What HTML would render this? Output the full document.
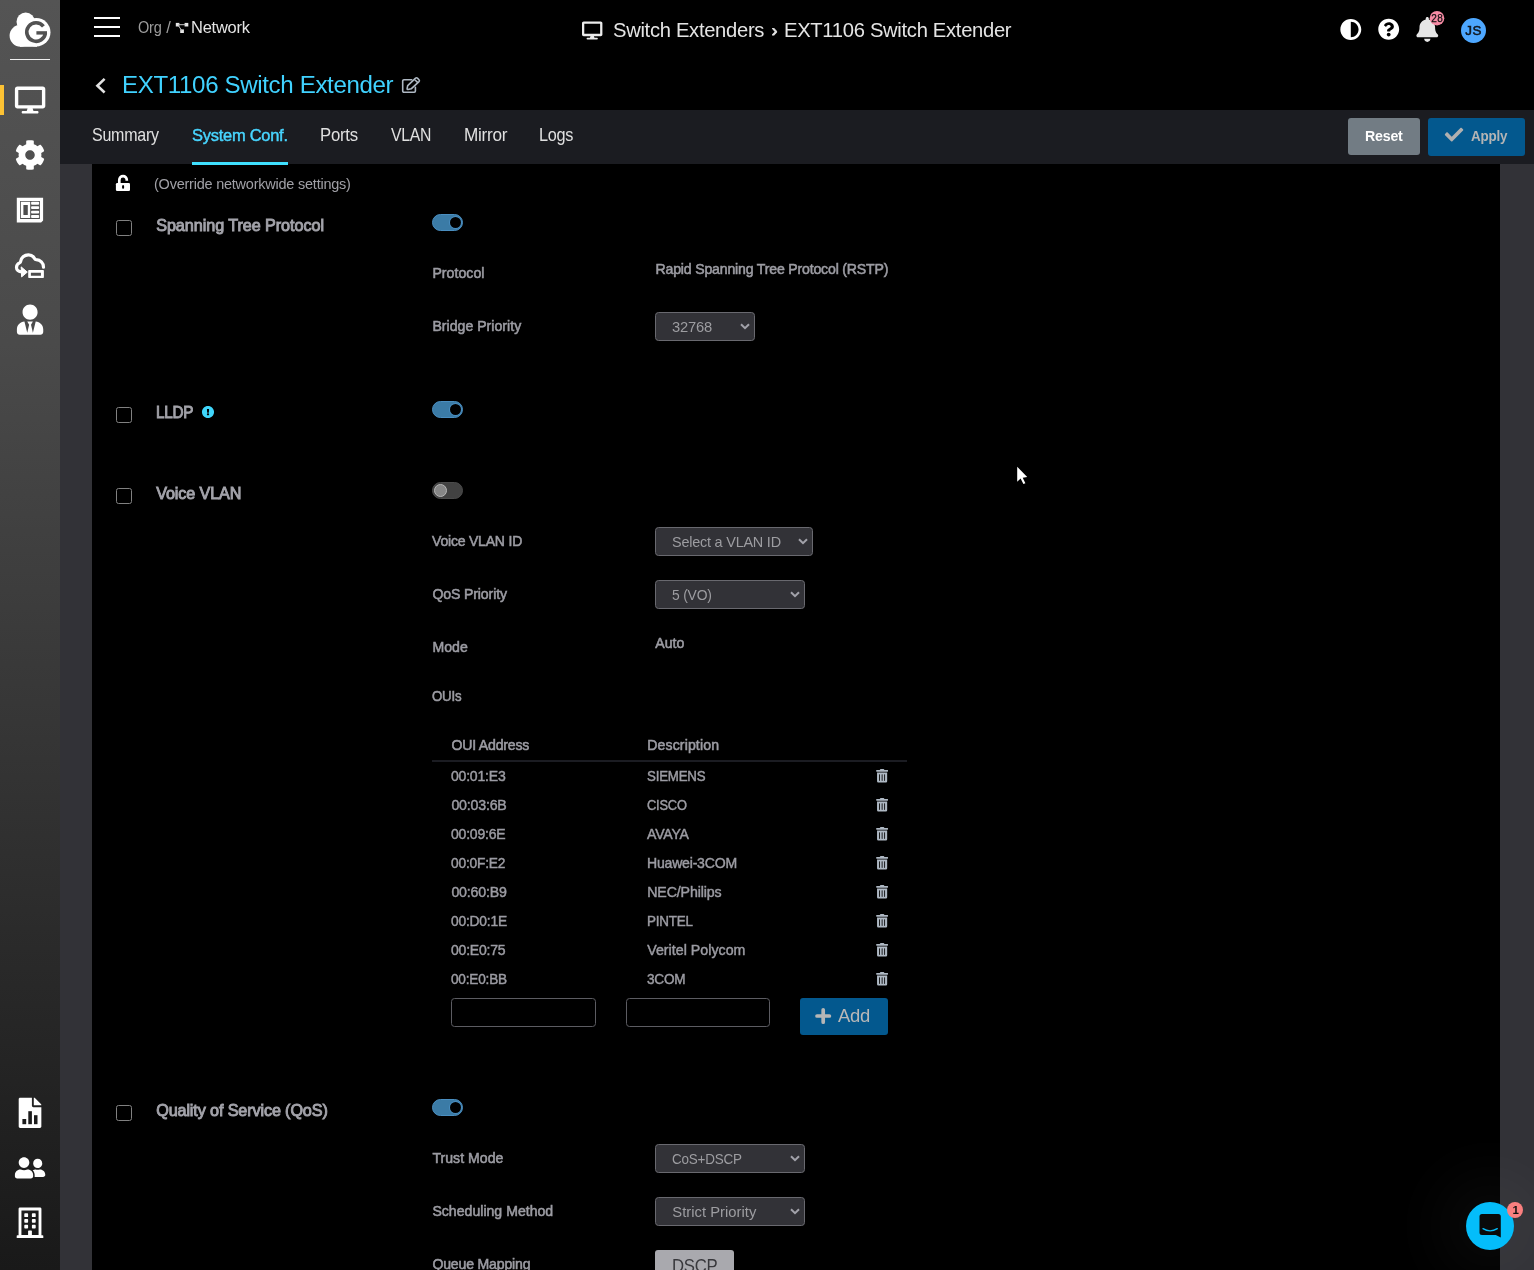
<!DOCTYPE html>
<html lang="en"><head><meta charset="utf-8"><title>EXT1106 Switch Extender</title>
<style>
html,body{margin:0;padding:0;background:#000;}
body{width:1534px;height:1270px;position:relative;overflow:hidden;font-family:"Liberation Sans",sans-serif;}
.b{position:absolute;display:block;}
.t{position:absolute;white-space:nowrap;line-height:20px;transform-origin:0 50%;}
#tx{position:absolute;left:0;top:0;width:1534px;height:1270px;z-index:5;will-change:transform;}
svg.i{position:absolute;left:0;top:0;z-index:4;}
</style></head><body>
<div class="b" style="left:0px;top:0px;width:60px;height:1270px;background:linear-gradient(180deg,#545454 0%,#4a4a4a 27%,#191919 100%);"></div>
<div class="b" style="left:60px;top:110px;width:1474px;height:54px;background:#1b1c21;"></div>
<div class="b" style="left:60px;top:164px;width:32px;height:1106px;background:#323237;"></div>
<div class="b" style="left:1500px;top:164px;width:34px;height:1106px;background:#323237;"></div>
<div class="b" style="left:192px;top:162px;width:96px;height:3px;background:#3fe0ff;"></div>
<div class="b" style="left:94px;top:17px;width:26px;height:2px;background:#fdfdfd;"></div>
<div class="b" style="left:94px;top:26px;width:26px;height:2px;background:#fdfdfd;"></div>
<div class="b" style="left:94px;top:35px;width:26px;height:2px;background:#fdfdfd;"></div>
<div class="b" style="left:0px;top:85px;width:4px;height:30px;background:#fcc234;"></div>
<div class="b" style="left:10px;top:59px;width:40px;height:1px;background:#f0f0f0;"></div>
<div class="b" style="left:1348px;top:118px;width:72px;height:37px;background:#727c84;border-radius:3px;"></div>
<div class="b" style="left:1428px;top:118px;width:97px;height:38px;background:#03588e;border-radius:3px;"></div>
<div class="b" style="left:800px;top:998px;width:88px;height:37px;background:#03588e;border-radius:3px;"></div>
<div class="b" style="left:655px;top:1250px;width:79px;height:40px;background:#a9a9ae;border-radius:3px;"></div>
<div class="b" style="left:116px;top:220px;width:16px;height:16px;box-sizing:border-box;border:1px solid #818181;border-radius:2.5px;"></div>
<div class="b" style="left:116px;top:407px;width:16px;height:16px;box-sizing:border-box;border:1px solid #818181;border-radius:2.5px;"></div>
<div class="b" style="left:116px;top:488px;width:16px;height:16px;box-sizing:border-box;border:1px solid #818181;border-radius:2.5px;"></div>
<div class="b" style="left:116px;top:1105px;width:16px;height:16px;box-sizing:border-box;border:1px solid #818181;border-radius:2.5px;"></div>
<div class="b" style="left:432px;top:214px;width:31px;height:17px;box-sizing:border-box;background:#3b7ba6;border:1px solid #4a8ec0;border-radius:9px;"></div><div class="b" style="left:450px;top:217px;width:11px;height:11px;background:#000;border-radius:50%;box-shadow:0 0 0 1px #4a8ec0;"></div>
<div class="b" style="left:432px;top:401px;width:31px;height:17px;box-sizing:border-box;background:#3b7ba6;border:1px solid #4a8ec0;border-radius:9px;"></div><div class="b" style="left:450px;top:404px;width:11px;height:11px;background:#000;border-radius:50%;box-shadow:0 0 0 1px #4a8ec0;"></div>
<div class="b" style="left:432px;top:482px;width:31px;height:17px;box-sizing:border-box;background:#424242;border:1px solid #4b4b4b;border-radius:9px;"></div><div class="b" style="left:434px;top:484px;width:13px;height:13px;background:#878787;border-radius:50%;box-sizing:border-box;border:1px solid #b8b8b8;"></div>
<div class="b" style="left:432px;top:1099px;width:31px;height:17px;box-sizing:border-box;background:#3b7ba6;border:1px solid #4a8ec0;border-radius:9px;"></div><div class="b" style="left:450px;top:1102px;width:11px;height:11px;background:#000;border-radius:50%;box-shadow:0 0 0 1px #4a8ec0;"></div>
<div class="b" style="left:655px;top:312px;width:100px;height:29px;box-sizing:border-box;background:#323237;border:1px solid #69696f;border-radius:3.5px;"></div><svg class="b" style="left:740px;top:323px" width="10" height="7" viewBox="0 0 10 7"><path d="M1 1.2 L5 5.2 L9 1.2" fill="none" stroke="#a2a2aa" stroke-width="2"/></svg>
<div class="b" style="left:655px;top:527px;width:158px;height:29px;box-sizing:border-box;background:#323237;border:1px solid #69696f;border-radius:3.5px;"></div><svg class="b" style="left:798px;top:538px" width="10" height="7" viewBox="0 0 10 7"><path d="M1 1.2 L5 5.2 L9 1.2" fill="none" stroke="#a2a2aa" stroke-width="2"/></svg>
<div class="b" style="left:655px;top:580px;width:150px;height:29px;box-sizing:border-box;background:#323237;border:1px solid #69696f;border-radius:3.5px;"></div><svg class="b" style="left:790px;top:591px" width="10" height="7" viewBox="0 0 10 7"><path d="M1 1.2 L5 5.2 L9 1.2" fill="none" stroke="#a2a2aa" stroke-width="2"/></svg>
<div class="b" style="left:655px;top:1144px;width:150px;height:29px;box-sizing:border-box;background:#323237;border:1px solid #69696f;border-radius:3.5px;"></div><svg class="b" style="left:790px;top:1155px" width="10" height="7" viewBox="0 0 10 7"><path d="M1 1.2 L5 5.2 L9 1.2" fill="none" stroke="#a2a2aa" stroke-width="2"/></svg>
<div class="b" style="left:655px;top:1197px;width:150px;height:29px;box-sizing:border-box;background:#323237;border:1px solid #69696f;border-radius:3.5px;"></div><svg class="b" style="left:790px;top:1208px" width="10" height="7" viewBox="0 0 10 7"><path d="M1 1.2 L5 5.2 L9 1.2" fill="none" stroke="#a2a2aa" stroke-width="2"/></svg>
<div class="b" style="left:451px;top:998px;width:145px;height:29px;box-sizing:border-box;border:1px solid #5c5c62;border-radius:3.5px;"></div>
<div class="b" style="left:626px;top:998px;width:144px;height:29px;box-sizing:border-box;border:1px solid #5c5c62;border-radius:3.5px;"></div>
<div class="b" style="left:432px;top:760px;width:475px;height:2px;background:#1b1c22;"></div>
<div class="b" style="left:1461px;top:18px;width:24.8px;height:24.8px;background:#4da7ff;border-radius:50%;"></div>
<div class="b" style="left:1466px;top:1202px;width:48px;height:48px;background:#04bdfa;border-radius:50%;box-shadow:0 0 60px 30px rgba(255,255,255,0.035);"></div>
<div class="b" style="left:1507px;top:1201.7px;width:16.2px;height:16.2px;background:#fa7f7f;border-radius:50%;"></div>
<svg class="i" width="1534" height="1270" viewBox="0 0 1534 1270">
<g fill="#fff"><circle cx="25.7" cy="21.8" r="9.2"/><circle cx="20.6" cy="35.8" r="11"/><circle cx="36.3" cy="32.3" r="14.2"/><rect x="20" y="36" width="17" height="10.8"/><rect x="18" y="20" width="14" height="16"/></g>
<path d="M43.43 26.27 A9.3 9.3 0 1 0 45.36 32.8" fill="none" stroke="#525252" stroke-width="3.6"/><rect x="36.4" y="31.2" width="10.6" height="3.4" fill="#525252"/>
<path transform="translate(14.9 86.6) scale(0.05277777777777778)" fill="#fff" d="M528 0H48C21.5 0 0 21.5 0 48v320c0 26.5 21.5 48 48 48h192l-16 48h-72c-13.3 0-24 10.7-24 24s10.7 24 24 24h272c13.3 0 24-10.7 24-24s-10.7-24-24-24h-72l-16-48h192c26.5 0 48-21.5 48-48V48c0-26.5-21.5-48-48-48zm-16 352H64V64h448v288z"/>
<path transform="translate(14.783935742971886 139.7839357429719) scale(0.05943775100401607)" fill="#fff" d="M487.4 315.7l-42.6-24.6c4.3-23.2 4.3-47 0-70.2l42.6-24.6c4.9-2.8 7.1-8.6 5.5-14-11.1-35.6-30-67.8-54.7-94.6-3.8-4.1-10-5.1-14.8-2.3L380.8 110c-17.9-15.4-38.5-27.3-60.8-35.1V25.8c0-5.6-3.9-10.5-9.4-11.7-36.7-8.2-74.3-7.8-109.2 0-5.5 1.2-9.4 6.1-9.4 11.7V75c-22.2 7.9-42.8 19.8-60.8 35.1L88.7 85.5c-4.9-2.8-11-1.900-14.8 2.300-24.700 26.700-43.600 58.900-54.700 94.600-1.700 5.400.600 11.200 5.500 14L67.300 221c-4.300 23.200-4.300 47 0 70.200l-42.600 24.600c-4.900 2.800-7.100 8.600-5.500 14 11.100 35.600 30 67.800 54.700 94.600 3.800 4.100 10 5.100 14.800 2.300l42.600-24.600c17.900 15.400 38.500 27.300 60.800 35.100v49.200c0 5.600 3.900 10.500 9.400 11.700 36.700 8.200 74.300 7.800 109.200 0 5.500-1.200 9.400-6.100 9.400-11.700v-49.200c22.200-7.900 42.800-19.800 60.800-35.100l42.600 24.600c4.900 2.800 11 1.900 14.800-2.300 24.700-26.700 43.600-58.900 54.700-94.600 1.500-5.500-.7-11.300-5.600-14.100zM256 336c-44.100 0-80-35.900-80-80s35.900-80 80-80 80 35.900 80 80-35.900 80-80 80z"/>
<path fill="#fff" fill-rule="evenodd" d="M16.8 197.7 H43.1 V220.4 L41.1 222.4 H16.8 Z M20.1 201 V219 H39.9 V201 Z"/>
<path fill="#fff" fill-rule="evenodd" d="M20.9 201.8 H30.2 V218 H20.9 Z M23.4 205.1 V214.9 H27.8 V205.1 Z"/>
<rect x="31.1" y="201.8" width="8" height="3.0" rx="0.8" fill="#fff"/>
<rect x="31.1" y="206.2" width="8" height="2.9" rx="0.8" fill="#fff"/>
<rect x="31.1" y="210.8" width="8" height="2.8" rx="0.8" fill="#fff"/>
<rect x="31.1" y="215" width="8" height="3.0" rx="0.8" fill="#fff"/>
<path fill="none" stroke="#fff" stroke-width="3.2" stroke-linecap="round" stroke-linejoin="round" d="M43.5 267.2 C43.5 263 40.3 259.9 36.2 259.7 C35.2 259.6 34.9 259.1 34.6 258.6 C33.4 256.3 31.200 254.800 28.500 254.800 C24.300 254.800 21 257.800 20.600 261.500 C20.500 262.300 20.100 262.600 19.500 262.900 C17.700 263.700 16.500 265.400 16.500 267.500 C16.500 270 18.500 271.900 21.800 271.900"/>
<path fill="#fff" d="M21.2 266.9 L27.3 272.1 L21.6 276.9 Z" stroke="#fff" stroke-width="1" stroke-linejoin="round"/>
<path fill="#fff" fill-rule="evenodd" d="M29 269.900 H43.100 A0.800 0.800 0 0 1 43.900 270.700 V277.200 A0.800 0.800 0 0 1 43.100 278 H29 A0.800 0.800 0 0 1 28.200 277.200 V270.700 A0.800 0.800 0 0 1 29 269.900 Z M30.900 272.700 V275.700 H40.900 V272.700 Z"/>
<path transform="translate(16.9 304.6) scale(0.0587890625)" fill="#fff" d="M224 256c70.7 0 128-57.300 128-128S294.700 0 224 0 96 57.300 96 128s57.300 128 128 128zm95.800 32.600L272 480l-32-136 32-56h-96l32 56-32 136-47.800-191.400C56.900 292 0 350.300 0 422.400V464c0 26.500 21.500 48 48 48h352c26.500 0 48-21.500 48-48v-41.600c0-72.100-56.900-130.400-128.200-133.800z"/>
<path transform="translate(18.7 1097.8) scale(0.058984375)" fill="#fff" d="M224 136V0H24C10.7 0 0 10.7 0 24v464c0 13.3 10.7 24 24 24h336c13.300 0 24-10.700 24-24V160H248c-13.200 0-24-10.800-24-24zm160-14.100v6.100H256V0h6.100c6.400 0 12.500 2.500 17 7l97.900 98c4.500 4.500 7 10.600 7 16.900z"/>
<rect x="22.4" y="1119" width="3.8" height="5.2" fill="#1c1c1c"/>
<rect x="28.3" y="1111.2" width="3.6" height="13.0" fill="#1c1c1c"/>
<rect x="34" y="1115.2" width="3.5" height="9.0" fill="#1c1c1c"/>
<path transform="translate(14.9 1155.78) scale(0.0475)" fill="#fff" d="M192 256c61.900 0 112-50.100 112-112S253.900 32 192 32 80 82.100 80 144s50.100 112 112 112zm76.800 32h-8.300c-20.800 10-43.900 16-68.500 16s-47.600-6-68.500-16h-8.300C51.600 288 0 339.600 0 403.200V432c0 26.500 21.500 48 48 48h288c26.500 0 48-21.500 48-48v-28.800c0-63.600-51.600-115.200-115.200-115.200zM480 256c53 0 96-43 96-96s-43-96-96-96-96 43-96 96 43 96 96 96zm48 32h-3.800c-13.900 4.800-28.600 8-44.200 8s-30.300-3.200-44.200-8H432c-20.400 0-39.200 5.900-55.700 15.400 24.400 26.300 39.700 61.200 39.700 99.800v38.400c0 2.200-.5 4.300-.6 6.400H592c26.500 0 48-21.500 48-48 0-61.900-50.100-112-112-112z"/>
<path transform="translate(16.7 1207.6) scale(0.059375)" fill="#fff" d="M128 148v-40c0-6.600 5.400-12 12-12h40c6.600 0 12 5.400 12 12v40c0 6.600-5.400 12-12 12h-40c-6.600 0-12-5.400-12-12zm140 12h40c6.600 0 12-5.400 12-12v-40c0-6.600-5.400-12-12-12h-40c-6.600 0-12 5.400-12 12v40c0 6.600 5.400 12 12 12zm-128 96h40c6.600 0 12-5.400 12-12v-40c0-6.600-5.400-12-12-12h-40c-6.600 0-12 5.400-12 12v40c0 6.600 5.400 12 12 12zm128 0h40c6.600 0 12-5.400 12-12v-40c0-6.600-5.400-12-12-12h-40c-6.600 0-12 5.400-12 12v40c0 6.600 5.400 12 12 12zm-76 84v-40c0-6.600-5.400-12-12-12h-40c-6.600 0-12 5.400-12 12v40c0 6.600 5.400 12 12 12h40c6.600 0 12-5.400 12-12zm76 12h40c6.600 0 12-5.400 12-12v-40c0-6.600-5.400-12-12-12h-40c-6.600 0-12 5.400-12 12v40c0 6.600 5.400 12 12 12zm180 124v36H0v-36c0-6.600 5.400-12 12-12h19.500V24c0-13.300 10.700-24 24-24h337c13.300 0 24 10.700 24 24v440H436c6.600 0 12 5.400 12 12zM79.500 463H192v-67c0-6.600 5.400-12 12-12h40c6.600 0 12 5.400 12 12v67h112.500V49L80 48l-.5 415z"/>
<g fill="#e6e6e6"><rect x="175.8" y="22.9" width="3.6" height="3.6"/><rect x="184.6" y="22.9" width="3.700" height="3.600"/><rect x="180.200" y="29.400" width="3.700" height="3.600"/></g><path d="M178 24.700 H186 M178 25 L182 31" stroke="#c8c8c8" stroke-width="1" fill="none"/>
<path transform="translate(582 21.4) scale(0.035416666666666666)" fill="#ececec" d="M528 0H48C21.5 0 0 21.5 0 48v320c0 26.5 21.5 48 48 48h192l-16 48h-72c-13.3 0-24 10.7-24 24s10.7 24 24 24h272c13.3 0 24-10.7 24-24s-10.7-24-24-24h-72l-16-48h192c26.5 0 48-21.5 48-48V48c0-26.5-21.5-48-48-48zm-16 352H64V64h448v288z"/>
<path transform="translate(1340.0129032258064 18.71290322580645) scale(0.04213709677419355)" fill="#fff" d="M8 256c0 136.966 111.033 248 248 248s248-111.034 248-248S392.966 8 256 8 8 119.033 8 256zm248 184V72c101.705 0 184 82.311 184 184 0 101.705-82.311 184-184 184z"/>
<path transform="translate(1377.9129032258065 18.412903225806453) scale(0.04213709677419355)" fill="#fff" d="M504 256c0 136.997-111.043 248-248 248S8 392.997 8 256C8 119.083 119.043 8 256 8s248 111.083 248 248zM262.655 90c-54.497 0-89.255 22.957-116.549 63.758-3.536 5.286-2.353 12.415 2.715 16.258l34.699 26.310c5.205 3.947 12.621 3.008 16.665-2.122 17.864-22.658 30.113-35.797 57.303-35.797 20.429 0 45.698 13.148 45.698 32.958 0 14.976-12.363 22.667-32.534 33.976C247.128 238.528 216 254.941 216 296v4c0 6.627 5.373 12 12 12h56c6.627 0 12-5.373 12-12v-1.333c0-28.462 83.186-29.647 83.186-106.667 0-58.002-60.165-102-116.531-102zM256 338c-25.365 0-46 20.635-46 46 0 25.364 20.635 46 46 46s46-20.636 46-46c0-25.365-20.635-46-46-46z"/>
<path transform="translate(1416.4 17) scale(0.0486328125)" fill="#e6e6e6" d="M224 512c35.320 0 63.970-28.650 63.970-64H160.030c0 35.350 28.650 64 63.970 64zm215.390-149.710c-19.320-20.760-55.470-51.990-55.470-154.290 0-77.700-54.480-139.900-127.940-155.160V32c0-17.670-14.320-32-31.980-32s-31.980 14.330-31.980 32v20.840C118.560 68.100 64.080 130.300 64.080 208c0 102.300-36.150 133.530-55.470 154.290-6 6.450-8.660 14.160-8.610 21.710.11 16.400 12.980 32 32.100 32h383.800c19.120 0 32-15.600 32.100-32 .05-7.550-2.610-15.270-8.610-21.710z"/>
<circle cx="1437" cy="18.2" r="7.3" fill="#f78ba5"/>
<path d="M104.600 78.900 L97.400 85.700 L104.600 92.500" fill="none" stroke="#e2e2e2" stroke-width="2.600" stroke-linejoin="miter"/>
<g fill="none" stroke="#aeb8c3" stroke-width="1.6" stroke-linecap="round" stroke-linejoin="round"><path d="M411.7 79.7 H403.9 A1.2 1.2 0 0 0 402.7 80.9 V91 A1.2 1.2 0 0 0 403.9 92.2 H414.2 A1.2 1.2 0 0 0 415.4 91 V87.2"/><path d="M407.7 85.6 L415.6 78.2 A1.3 1.3 0 0 1 417.4 78.2 L419 79.8 A1.300 1.300 0 0 1 419 81.600 L411.200 88.800 L407.900 89.500 A0.800 0.800 0 0 1 407.100 88.700 Z M414.400 79.300 L417.800 82.700"/></g>
<path transform="translate(1444.8 125.370703125) scale(0.0361328125)" fill="#b0b0b0" d="M173.898 439.404l-166.400-166.400c-9.997-9.997-9.997-26.206 0-36.204l36.203-36.204c9.997-9.998 26.207-9.998 36.204 0L192 312.690 432.095 72.596c9.997-9.997 26.207-9.997 36.204 0l36.203 36.204c9.997 9.997 9.997 26.206 0 36.204l-294.400 294.401c-9.998 9.997-26.207 9.997-36.204-.001z"/>
<rect x="115.900" y="182.900" width="14.100" height="8.200" rx="1.300" fill="#fff"/><path d="M119.300 183.500 V179.900 A3.750 3.750 0 0 1 126.800 179.900 V180.800" fill="none" stroke="#fff" stroke-width="2.700"/><ellipse cx="123.100" cy="186.900" rx="1.100" ry="1.900" fill="#000"/>
<path transform="translate(201.75483870967741 405.7548387096774) scale(0.02439516129032258)" fill="#40d6fb" d="M504 256c0 136.997-111.043 248-248 248S8 392.997 8 256C8 119.083 119.043 8 256 8s248 111.083 248 248zm-248 50c-25.405 0-46 20.595-46 46s20.595 46 46 46 46-20.595 46-46-20.595-46-46-46zm-43.673-165.346l7.418 136c.347 6.364 5.609 11.346 11.982 11.346h48.546c6.373 0 11.635-4.982 11.982-11.346l7.418-136c.375-6.874-5.098-12.654-11.982-12.654h-63.383c-6.884 0-12.356 5.780-11.981 12.654z"/>
<path transform="translate(876.2 769.1) scale(0.0263671875)" fill="#aeb8c3" d="M32 464a48 48 0 0 0 48 48h288a48 48 0 0 0 48-48V128H32zm272-256a16 16 0 0 1 32 0v224a16 16 0 0 1-32 0zm-96 0a16 16 0 0 1 32 0v224a16 16 0 0 1-32 0zm-96 0a16 16 0 0 1 32 0v224a16 16 0 0 1-32 0zM432 32H312l-9.4-18.7A24 24 0 0 0 281.1 0H166.8a23.72 23.72 0 0 0-21.4 13.3L136 32H16A16 16 0 0 0 0 48v32a16 16 0 0 0 16 16h416a16 16 0 0 0 16-16V48a16 16 0 0 0-16-16z"/>
<path transform="translate(876.2 798.1) scale(0.0263671875)" fill="#aeb8c3" d="M32 464a48 48 0 0 0 48 48h288a48 48 0 0 0 48-48V128H32zm272-256a16 16 0 0 1 32 0v224a16 16 0 0 1-32 0zm-96 0a16 16 0 0 1 32 0v224a16 16 0 0 1-32 0zm-96 0a16 16 0 0 1 32 0v224a16 16 0 0 1-32 0zM432 32H312l-9.4-18.7A24 24 0 0 0 281.1 0H166.8a23.72 23.72 0 0 0-21.4 13.3L136 32H16A16 16 0 0 0 0 48v32a16 16 0 0 0 16 16h416a16 16 0 0 0 16-16V48a16 16 0 0 0-16-16z"/>
<path transform="translate(876.2 827.1) scale(0.0263671875)" fill="#aeb8c3" d="M32 464a48 48 0 0 0 48 48h288a48 48 0 0 0 48-48V128H32zm272-256a16 16 0 0 1 32 0v224a16 16 0 0 1-32 0zm-96 0a16 16 0 0 1 32 0v224a16 16 0 0 1-32 0zm-96 0a16 16 0 0 1 32 0v224a16 16 0 0 1-32 0zM432 32H312l-9.4-18.7A24 24 0 0 0 281.1 0H166.8a23.72 23.72 0 0 0-21.4 13.3L136 32H16A16 16 0 0 0 0 48v32a16 16 0 0 0 16 16h416a16 16 0 0 0 16-16V48a16 16 0 0 0-16-16z"/>
<path transform="translate(876.2 856.1) scale(0.0263671875)" fill="#aeb8c3" d="M32 464a48 48 0 0 0 48 48h288a48 48 0 0 0 48-48V128H32zm272-256a16 16 0 0 1 32 0v224a16 16 0 0 1-32 0zm-96 0a16 16 0 0 1 32 0v224a16 16 0 0 1-32 0zm-96 0a16 16 0 0 1 32 0v224a16 16 0 0 1-32 0zM432 32H312l-9.4-18.7A24 24 0 0 0 281.1 0H166.8a23.72 23.72 0 0 0-21.4 13.3L136 32H16A16 16 0 0 0 0 48v32a16 16 0 0 0 16 16h416a16 16 0 0 0 16-16V48a16 16 0 0 0-16-16z"/>
<path transform="translate(876.2 885.1) scale(0.0263671875)" fill="#aeb8c3" d="M32 464a48 48 0 0 0 48 48h288a48 48 0 0 0 48-48V128H32zm272-256a16 16 0 0 1 32 0v224a16 16 0 0 1-32 0zm-96 0a16 16 0 0 1 32 0v224a16 16 0 0 1-32 0zm-96 0a16 16 0 0 1 32 0v224a16 16 0 0 1-32 0zM432 32H312l-9.4-18.7A24 24 0 0 0 281.1 0H166.8a23.72 23.72 0 0 0-21.4 13.3L136 32H16A16 16 0 0 0 0 48v32a16 16 0 0 0 16 16h416a16 16 0 0 0 16-16V48a16 16 0 0 0-16-16z"/>
<path transform="translate(876.2 914.1) scale(0.0263671875)" fill="#aeb8c3" d="M32 464a48 48 0 0 0 48 48h288a48 48 0 0 0 48-48V128H32zm272-256a16 16 0 0 1 32 0v224a16 16 0 0 1-32 0zm-96 0a16 16 0 0 1 32 0v224a16 16 0 0 1-32 0zm-96 0a16 16 0 0 1 32 0v224a16 16 0 0 1-32 0zM432 32H312l-9.4-18.7A24 24 0 0 0 281.1 0H166.8a23.72 23.72 0 0 0-21.4 13.3L136 32H16A16 16 0 0 0 0 48v32a16 16 0 0 0 16 16h416a16 16 0 0 0 16-16V48a16 16 0 0 0-16-16z"/>
<path transform="translate(876.2 943.1) scale(0.0263671875)" fill="#aeb8c3" d="M32 464a48 48 0 0 0 48 48h288a48 48 0 0 0 48-48V128H32zm272-256a16 16 0 0 1 32 0v224a16 16 0 0 1-32 0zm-96 0a16 16 0 0 1 32 0v224a16 16 0 0 1-32 0zm-96 0a16 16 0 0 1 32 0v224a16 16 0 0 1-32 0zM432 32H312l-9.4-18.7A24 24 0 0 0 281.1 0H166.8a23.72 23.72 0 0 0-21.4 13.3L136 32H16A16 16 0 0 0 0 48v32a16 16 0 0 0 16 16h416a16 16 0 0 0 16-16V48a16 16 0 0 0-16-16z"/>
<path transform="translate(876.2 972.1) scale(0.0263671875)" fill="#aeb8c3" d="M32 464a48 48 0 0 0 48 48h288a48 48 0 0 0 48-48V128H32zm272-256a16 16 0 0 1 32 0v224a16 16 0 0 1-32 0zm-96 0a16 16 0 0 1 32 0v224a16 16 0 0 1-32 0zm-96 0a16 16 0 0 1 32 0v224a16 16 0 0 1-32 0zM432 32H312l-9.4-18.7A24 24 0 0 0 281.1 0H166.8a23.72 23.72 0 0 0-21.4 13.3L136 32H16A16 16 0 0 0 0 48v32a16 16 0 0 0 16 16h416a16 16 0 0 0 16-16V48a16 16 0 0 0-16-16z"/>
<path d="M823.2 1009.8 V1022.2 M817 1016 H829.4" stroke="#b6b6b6" stroke-width="3.7" stroke-linecap="round" fill="none"/>
<path d="M1482 1213.900 H1498.300 A2.500 2.500 0 0 1 1500.800 1216.400 V1237.600 L1495.800 1235 H1482 A2.500 2.500 0 0 1 1479.500 1232.500 V1216.400 A2.500 2.500 0 0 1 1482 1213.900 Z" fill="#0a0a0a"/><path d="M1483 1228.600 Q1490.100 1233 1497.300 1228.600" fill="none" stroke="#04bdfa" stroke-width="1.300" stroke-linecap="round"/>
<path transform="translate(0.2 0.8)" d="M1017 466 V481 L1020.400 477.800 L1023.200 483.300 L1025.200 482.400 L1022.500 477 L1027 476.300 Z" fill="#fff"/>
</svg>
<div id="tx">
<span class="t" id="t0" style="left:137.60px;top:17.00px;font-size:16.5px;color:#9c9c9c;letter-spacing:-0.247px;transform:scaleX(0.8811);">Org</span>
<span class="t" id="t1" style="left:166.30px;top:17.00px;font-size:16.5px;color:#9c9c9c;">/</span>
<span class="t" id="t2" style="left:191.40px;top:17.00px;font-size:16.5px;color:#e4e4e4;letter-spacing:-0.247px;transform:scaleX(0.9976);">Network</span>
<span class="t" id="t3" style="left:612.90px;top:20.00px;font-size:20.6px;color:#e4e4e4;letter-spacing:-0.309px;transform:scaleX(0.9802);">Switch Extenders</span>
<span class="t" id="t4" style="left:771.80px;top:21.00px;font-size:17px;color:#e4e4e4;-webkit-text-stroke:0.8px #e4e4e4;">›</span>
<span class="t" id="t5" style="left:783.80px;top:20.00px;font-size:20.6px;color:#e4e4e4;letter-spacing:-0.309px;transform:scaleX(0.9807);">EXT1106 Switch Extender</span>
<span class="t" id="t6" style="left:121.70px;top:75.00px;font-size:24.7px;color:#40d2ff;letter-spacing:-0.370px;transform:scaleX(0.9763);">EXT1106 Switch Extender</span>
<span class="t" id="t7" style="left:92.40px;top:125.00px;font-size:17.5px;color:#e0e0e0;letter-spacing:-0.263px;transform:scaleX(0.9155);">Summary</span>
<span class="t" id="t8" style="left:192.30px;top:125.00px;font-size:16.5px;color:#48d5ff;-webkit-text-stroke:0.45px #48d5ff;letter-spacing:-0.247px;transform:scaleX(0.9967);">System Conf.</span>
<span class="t" id="t9" style="left:320.00px;top:125.00px;font-size:17.5px;color:#e0e0e0;letter-spacing:-0.263px;transform:scaleX(0.9549);">Ports</span>
<span class="t" id="t10" style="left:390.50px;top:125.00px;font-size:17.5px;color:#e0e0e0;letter-spacing:-0.263px;transform:scaleX(0.9013);">VLAN</span>
<span class="t" id="t11" style="left:463.50px;top:125.00px;font-size:17.5px;color:#e0e0e0;letter-spacing:-0.263px;transform:scaleX(0.9803);">Mirror</span>
<span class="t" id="t12" style="left:538.50px;top:125.00px;font-size:17.5px;color:#e0e0e0;letter-spacing:-0.263px;transform:scaleX(0.9281);">Logs</span>
<span class="t" id="t13" style="left:1364.90px;top:126.01px;font-size:14.8px;color:#ffffff;font-weight:bold;letter-spacing:-0.222px;transform:scaleX(0.9588);">Reset</span>
<span class="t" id="t14" style="left:1470.90px;top:126.01px;font-size:14.8px;color:#b4b4b4;font-weight:bold;letter-spacing:-0.222px;transform:scaleX(0.9075);">Apply</span>
<span class="t" id="t15" style="left:154.30px;top:174.01px;font-size:14.8px;color:#a0a0a6;letter-spacing:-0.222px;transform:scaleX(0.9779);">(Override networkwide settings)</span>
<span class="t" id="t16" style="left:156.20px;top:215.01px;font-size:16.2px;color:#a3a3aa;-webkit-text-stroke:0.9px #a3a3aa;letter-spacing:-0.066px;">Spanning Tree Protocol</span>
<span class="t" id="t17" style="left:156.20px;top:402.01px;font-size:16.2px;color:#a3a3aa;-webkit-text-stroke:0.9px #a3a3aa;letter-spacing:-0.243px;transform:scaleX(0.9441);">LLDP</span>
<span class="t" id="t18" style="left:156.20px;top:483.01px;font-size:16.2px;color:#a3a3aa;-webkit-text-stroke:0.9px #a3a3aa;letter-spacing:-0.121px;">Voice VLAN</span>
<span class="t" id="t19" style="left:156.20px;top:1100.01px;font-size:16.2px;color:#a3a3aa;-webkit-text-stroke:0.9px #a3a3aa;letter-spacing:-0.127px;">Quality of Service (QoS)</span>
<span class="t" id="t20" style="left:432.40px;top:263.01px;font-size:14.1px;color:#9c9ca3;-webkit-text-stroke:0.55px #9c9ca3;letter-spacing:0.055px;">Protocol</span>
<span class="t" id="t21" style="left:432.40px;top:316.01px;font-size:14.1px;color:#9c9ca3;-webkit-text-stroke:0.55px #9c9ca3;letter-spacing:0.020px;">Bridge Priority</span>
<span class="t" id="t22" style="left:432.40px;top:531.01px;font-size:14.1px;color:#9c9ca3;-webkit-text-stroke:0.55px #9c9ca3;letter-spacing:-0.211px;transform:scaleX(0.9957);">Voice VLAN ID</span>
<span class="t" id="t23" style="left:432.40px;top:584.01px;font-size:14.1px;color:#9c9ca3;-webkit-text-stroke:0.55px #9c9ca3;letter-spacing:-0.124px;">QoS Priority</span>
<span class="t" id="t24" style="left:432.40px;top:637.01px;font-size:14.1px;color:#9c9ca3;-webkit-text-stroke:0.55px #9c9ca3;letter-spacing:0.046px;">Mode</span>
<span class="t" id="t25" style="left:432.40px;top:686.01px;font-size:14.1px;color:#9c9ca3;-webkit-text-stroke:0.55px #9c9ca3;letter-spacing:-0.211px;transform:scaleX(0.9404);">OUIs</span>
<span class="t" id="t26" style="left:432.40px;top:1148.01px;font-size:14.1px;color:#9c9ca3;-webkit-text-stroke:0.55px #9c9ca3;letter-spacing:0.027px;">Trust Mode</span>
<span class="t" id="t27" style="left:432.40px;top:1201.01px;font-size:14.1px;color:#9c9ca3;-webkit-text-stroke:0.55px #9c9ca3;letter-spacing:0.008px;">Scheduling Method</span>
<span class="t" id="t28" style="left:432.40px;top:1254.01px;font-size:14.1px;color:#9c9ca3;-webkit-text-stroke:0.55px #9c9ca3;letter-spacing:-0.183px;">Queue Mapping</span>
<span class="t" id="t29" style="left:655.50px;top:259.01px;font-size:14.1px;color:#9c9ca3;-webkit-text-stroke:0.55px #9c9ca3;letter-spacing:-0.177px;">Rapid Spanning Tree Protocol (RSTP)</span>
<span class="t" id="t30" style="left:655.20px;top:633.01px;font-size:14.1px;color:#9c9ca3;-webkit-text-stroke:0.55px #9c9ca3;letter-spacing:0.067px;">Auto</span>
<span class="t" id="t31" style="left:672.30px;top:317.01px;font-size:14.8px;color:#9d9da1;letter-spacing:-0.222px;transform:scaleX(0.9958);">32768</span>
<span class="t" id="t32" style="left:672.30px;top:532.01px;font-size:14.8px;color:#9d9da1;letter-spacing:-0.222px;transform:scaleX(0.9757);">Select a VLAN ID</span>
<span class="t" id="t33" style="left:672.30px;top:585.01px;font-size:14.8px;color:#9d9da1;letter-spacing:-0.222px;transform:scaleX(0.9394);">5 (VO)</span>
<span class="t" id="t34" style="left:672.30px;top:1149.01px;font-size:14.8px;color:#9d9da1;letter-spacing:-0.222px;transform:scaleX(0.9105);">CoS+DSCP</span>
<span class="t" id="t35" style="left:672.30px;top:1202.01px;font-size:14.8px;color:#9d9da1;letter-spacing:0.010px;">Strict Priority</span>
<span class="t" id="t36" style="left:451.40px;top:735.01px;font-size:14.1px;color:#9c9ca3;-webkit-text-stroke:0.55px #9c9ca3;letter-spacing:-0.190px;">OUI Address</span>
<span class="t" id="t37" style="left:647.20px;top:735.01px;font-size:14.1px;color:#9c9ca3;-webkit-text-stroke:0.55px #9c9ca3;letter-spacing:0.130px;">Description</span>
<span class="t" id="t38" style="left:451.40px;top:766.00px;font-size:14.2px;color:#9c9ca3;-webkit-text-stroke:0.45px #9c9ca3;letter-spacing:-0.213px;transform:scaleX(0.9888);">00:01:E3</span>
<span class="t" id="t39" style="left:647.20px;top:766.00px;font-size:14.2px;color:#9c9ca3;-webkit-text-stroke:0.45px #9c9ca3;letter-spacing:-0.213px;transform:scaleX(0.9363);">SIEMENS</span>
<span class="t" id="t40" style="left:451.40px;top:795.00px;font-size:14.2px;color:#9c9ca3;-webkit-text-stroke:0.45px #9c9ca3;letter-spacing:-0.200px;">00:03:6B</span>
<span class="t" id="t41" style="left:647.20px;top:795.00px;font-size:14.2px;color:#9c9ca3;-webkit-text-stroke:0.45px #9c9ca3;letter-spacing:-0.213px;transform:scaleX(0.9050);">CISCO</span>
<span class="t" id="t42" style="left:451.40px;top:824.00px;font-size:14.2px;color:#9c9ca3;-webkit-text-stroke:0.45px #9c9ca3;letter-spacing:-0.213px;transform:scaleX(0.9869);">00:09:6E</span>
<span class="t" id="t43" style="left:647.20px;top:824.00px;font-size:14.2px;color:#9c9ca3;-webkit-text-stroke:0.45px #9c9ca3;letter-spacing:-0.213px;transform:scaleX(0.9939);">AVAYA</span>
<span class="t" id="t44" style="left:451.40px;top:853.00px;font-size:14.2px;color:#9c9ca3;-webkit-text-stroke:0.45px #9c9ca3;letter-spacing:-0.213px;transform:scaleX(0.9699);">00:0F:E2</span>
<span class="t" id="t45" style="left:647.20px;top:853.00px;font-size:14.2px;color:#9c9ca3;-webkit-text-stroke:0.45px #9c9ca3;letter-spacing:-0.213px;transform:scaleX(0.9912);">Huawei-3COM</span>
<span class="t" id="t46" style="left:451.40px;top:882.00px;font-size:14.2px;color:#9c9ca3;-webkit-text-stroke:0.45px #9c9ca3;letter-spacing:-0.200px;">00:60:B9</span>
<span class="t" id="t47" style="left:647.20px;top:882.00px;font-size:14.2px;color:#9c9ca3;-webkit-text-stroke:0.45px #9c9ca3;letter-spacing:-0.120px;">NEC/Philips</span>
<span class="t" id="t48" style="left:451.40px;top:911.00px;font-size:14.2px;color:#9c9ca3;-webkit-text-stroke:0.45px #9c9ca3;letter-spacing:-0.213px;transform:scaleX(0.9728);">00:D0:1E</span>
<span class="t" id="t49" style="left:647.20px;top:911.00px;font-size:14.2px;color:#9c9ca3;-webkit-text-stroke:0.45px #9c9ca3;letter-spacing:-0.213px;transform:scaleX(0.9461);">PINTEL</span>
<span class="t" id="t50" style="left:451.40px;top:940.00px;font-size:14.2px;color:#9c9ca3;-webkit-text-stroke:0.45px #9c9ca3;letter-spacing:-0.213px;transform:scaleX(0.9869);">00:E0:75</span>
<span class="t" id="t51" style="left:647.20px;top:940.00px;font-size:14.2px;color:#9c9ca3;-webkit-text-stroke:0.45px #9c9ca3;letter-spacing:0.030px;">Veritel Polycom</span>
<span class="t" id="t52" style="left:451.40px;top:969.00px;font-size:14.2px;color:#9c9ca3;-webkit-text-stroke:0.45px #9c9ca3;letter-spacing:-0.213px;transform:scaleX(0.9596);">00:E0:BB</span>
<span class="t" id="t53" style="left:647.20px;top:969.00px;font-size:14.2px;color:#9c9ca3;-webkit-text-stroke:0.45px #9c9ca3;letter-spacing:-0.213px;transform:scaleX(0.9565);">3COM</span>
<span class="t" id="t54" style="left:837.80px;top:1006.01px;font-size:18.5px;color:#b8b8b8;letter-spacing:-0.277px;transform:scaleX(0.9978);">Add</span>
<span class="t" id="t55" style="left:672.20px;top:1256.01px;font-size:18.5px;color:#38383c;letter-spacing:-0.277px;transform:scaleX(0.9056);">DSCP</span>
<span class="t" id="t56" style="left:1431.30px;top:9.00px;font-size:10px;color:#111;-webkit-text-stroke:0.25px #111;letter-spacing:0.270px;">28</span>
<span class="t" id="t57" style="left:1465.30px;top:21.00px;font-size:13.4px;color:#10151c;-webkit-text-stroke:0.5px #10151c;letter-spacing:0.570px;">JS</span>
<span class="t" id="t58" style="left:1512.50px;top:1200.00px;font-size:11.5px;color:#111;font-weight:bold;">1</span>
</div>
</body></html>
